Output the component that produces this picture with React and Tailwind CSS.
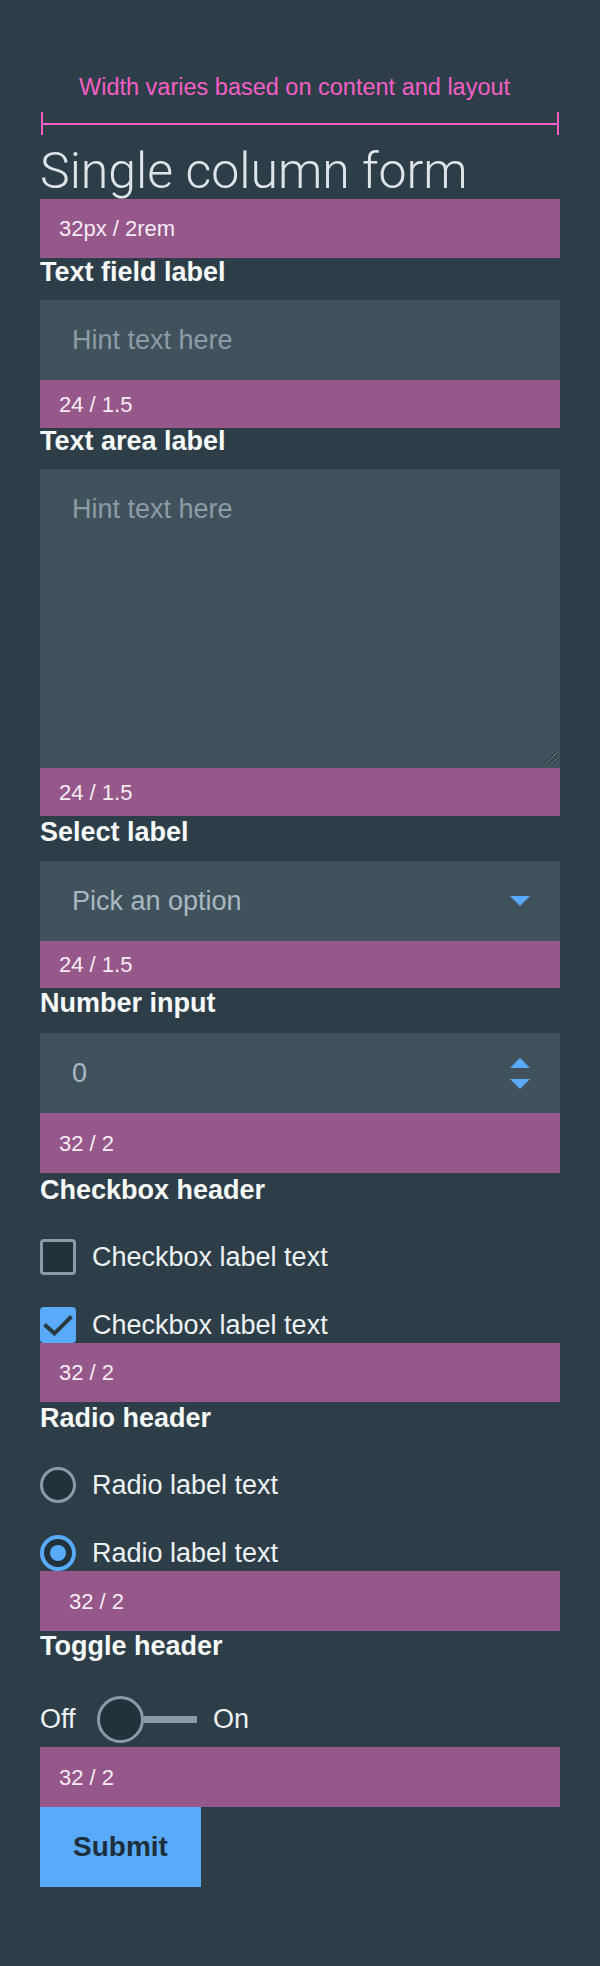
import React from 'react';

function Note({ className = 'h-[59px]', indent = 'pl-[19px]', children }) {
  return (
    <div className={`flex items-center bg-[#96588a] text-[22px] text-[#f6ecf4] ${className} ${indent}`}>
      {children}
    </div>
  );
}

function Label({ className = '', children }) {
  return (
    <div className={`text-[27px] font-bold leading-[27px] text-[#f7f9fa] ${className}`}>
      {children}
    </div>
  );
}

function Triangle({ up = false }) {
  return (
    <svg width="20" height="10" viewBox="0 0 20 10" className="block">
      {up ? <polygon points="10,0 20,10 0,10" fill="#5aaafa" /> : <polygon points="0,0 20,0 10,10" fill="#5aaafa" />}
    </svg>
  );
}

export default function App() {
  return (
    <div className="min-h-[1966px] w-full bg-[#2d3e48] px-[40px] pb-[79px] font-['Liberation_Sans',Arial,sans-serif] text-white">
      {/* dimension annotation */}
      <p className="pt-[73px] pl-[39px] text-[23.5px] leading-[28px] text-[#f45ec6]">Width varies based on content and layout</p>
      <div className="mt-[11px] flex h-[23px] items-center px-[1px]">
        <span className="h-full w-[2px] bg-[#f45ec6]" />
        <span className="h-[2px] flex-1 bg-[#f45ec6]" />
        <span className="h-full w-[2px] bg-[#f45ec6]" />
      </div>

      <h1 className="mt-[9px] h-[55px] font-['Roboto',sans-serif] text-[50px] font-light leading-[55px] text-[#dfe4e8]">
        Single column form
      </h1>
      <Note>32px / 2rem</Note>

      {/* text field */}
      <Label className="h-[42px] pt-[1px]">Text field label</Label>
      <div className="flex h-[80px] items-center bg-[#41525c] pl-[32px] text-[27px] text-[#8c9ba5]">Hint text here</div>
      <Note className="h-[48px]">24 / 1.5</Note>

      {/* text area */}
      <Label className="h-[41px]">Text area label</Label>
      <div className="flex h-[299px] flex-col justify-between bg-[#41525c] pl-[32px] text-[27px] text-[#8c9ba5]">
        <div className="pt-[20px] leading-[40px]">Hint text here</div>
        <svg width="14" height="14" viewBox="0 0 14 14" className="mr-[2px] mb-[3px] self-end">
          <line x1="1" y1="13.5" x2="14" y2="0.5" stroke="#1c2830" strokeWidth="2.5" />
          <line x1="1" y1="13.5" x2="14" y2="0.5" stroke="#a3acb1" strokeWidth="1" />
          <line x1="7" y1="13.5" x2="14" y2="6.5" stroke="#1c2830" strokeWidth="2.5" />
          <line x1="7" y1="13.5" x2="14" y2="6.5" stroke="#a3acb1" strokeWidth="1" />
        </svg>
      </div>
      <Note className="h-[48px]">24 / 1.5</Note>

      {/* select */}
      <Label className="h-[45px] pt-[3px]">Select label</Label>
      <div className="flex h-[80px] items-center justify-between bg-[#41525c] pl-[32px] pr-[30px] text-[27px] text-[#a9b8c1]">
        <span>Pick an option</span>
        <Triangle />
      </div>
      <Note className="h-[47px]">24 / 1.5</Note>

      {/* number */}
      <Label className="h-[45px] pt-[2px]">Number input</Label>
      <div className="flex h-[80px] items-center justify-between bg-[#41525c] pl-[32px] pr-[30px] text-[27px] text-[#a9b8c1]">
        <span>0</span>
        <div className="flex flex-col gap-[11px]">
          <Triangle up />
          <Triangle />
        </div>
      </div>
      <Note className="h-[60px]">32 / 2</Note>

      {/* checkboxes */}
      <Label className="h-[66px] pt-[4px]">Checkbox header</Label>
      <div className="flex flex-col gap-[32px] text-[27px] text-[#eef2f4]">
        <label className="flex h-[36px] items-center gap-[16px]">
          <span className="h-[36px] w-[36px] rounded-[4px] border-[3px] border-[#8a9ba5] bg-[#21323b]" />
          <span>Checkbox label text</span>
        </label>
        <label className="flex h-[36px] items-center gap-[16px]">
          <span className="h-[36px] w-[36px] rounded-[4px] bg-[#5aaafa]">
            <svg width="36" height="36" viewBox="0 0 36 36" className="block">
              <polyline points="4.5,17.5 14.5,26.5 31.5,9.5" fill="none" stroke="#2a3b45" strokeWidth="4" />
            </svg>
          </span>
          <span>Checkbox label text</span>
        </label>
      </div>
      <Note className="h-[59px]">32 / 2</Note>

      {/* radios */}
      <Label className="h-[65px] pt-[3px]">Radio header</Label>
      <div className="flex flex-col gap-[32px] text-[27px] text-[#eef2f4]">
        <label className="flex h-[36px] items-center gap-[16px]">
          <span className="h-[36px] w-[36px] rounded-full border-[3px] border-[#8a9ba5] bg-[#21323b]" />
          <span>Radio label text</span>
        </label>
        <label className="flex h-[36px] items-center gap-[16px]">
          <span className="flex h-[36px] w-[36px] items-center justify-center rounded-full border-[4px] border-[#5aaafa] bg-[#21323b]">
            <span className="h-[16px] w-[16px] rounded-full bg-[#5aaafa]" />
          </span>
          <span>Radio label text</span>
        </label>
      </div>
      <Note className="h-[60px]" indent="pl-[29px]">32 / 2</Note>

      {/* toggle */}
      <Label className="h-[65px] pt-[2px]">Toggle header</Label>
      <div className="flex h-[47px] items-center text-[27px] text-[#eef2f4]">
        <span className="w-[57px]">Off</span>
        <span className="h-[47px] w-[47px] rounded-full border-[3px] border-[#8a9ba5] bg-[#21323b]" />
        <span className="h-[7px] w-[53px] bg-[#8a9ba5]" />
        <span className="ml-[16px]">On</span>
      </div>
      <Note className="mt-[4px] h-[60px]">32 / 2</Note>

      <button className="h-[80px] w-[161px] bg-[#5aaafa] text-[28px] font-bold text-[#1c2f3b]">Submit</button>
    </div>
  );
}
